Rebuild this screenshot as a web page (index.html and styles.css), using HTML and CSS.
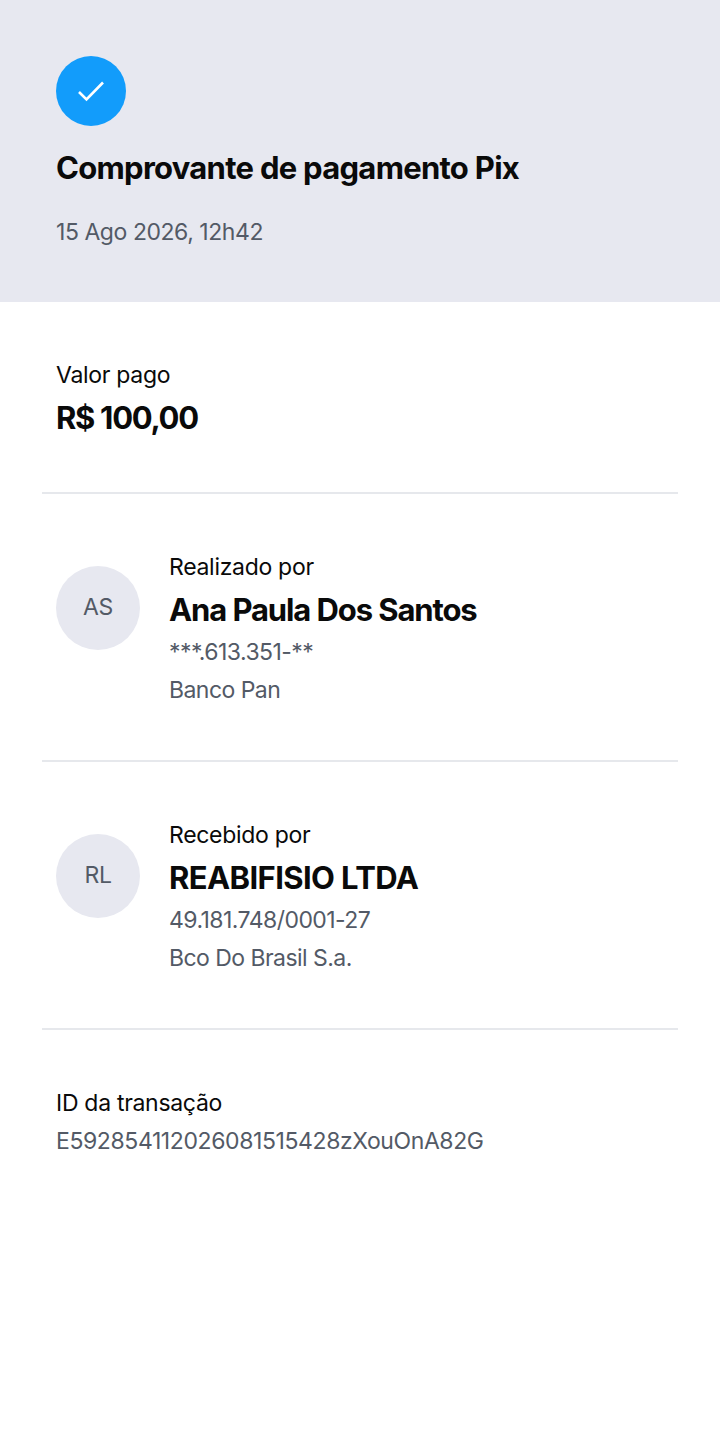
FILE: index.html
```html
<!DOCTYPE html>
<html lang="pt">
<head>
  <meta charset="UTF-8">
  <title>Comprovante de pagamento Pix</title>
  <link rel="stylesheet" href="styles.css">
</head>
<body>
  <header class="top">
    <div class="check">
      <svg width="30" height="24" viewBox="0 0 30 24"><path d="M3 13 L10.5 20.5 L27 3.5" fill="none" stroke="#fff" stroke-width="2.6"/></svg>
    </div>
    <h1>Comprovante de pagamento Pix</h1>
    <p class="date">15 Ago 2026, 12h42</p>
  </header>
  <section class="amount">
    <p class="label">Valor pago</p>
    <p class="value">R$ 100,00</p>
  </section>
  <section class="party">
    <div class="avatar">AS</div>
    <div class="info">
      <p class="label">Realizado por</p>
      <p class="name">Ana Paula Dos Santos</p>
      <p class="muted">***.613.351-**</p>
      <p class="muted">Banco Pan</p>
    </div>
  </section>
  <section class="party">
    <div class="avatar">RL</div>
    <div class="info">
      <p class="label">Recebido por</p>
      <p class="name name-caps">REABIFISIO LTDA</p>
      <p class="muted">49.181.748/0001-27</p>
      <p class="muted">Bco Do Brasil S.a.</p>
    </div>
  </section>
  <section class="txid">
    <p class="label">ID da transação</p>
    <p class="muted">E592854112026081515428zXouOnA82G</p>
  </section>
</body>
</html>
```

FILE: styles.css
```css
body {
  margin: 0;
  font-family: 'Inter', 'Liberation Sans', sans-serif;
  background: #fff;
  color: #0a0a0a;
  min-height: 1435px;
}

p, h1 {
  margin: 0;
}

.top {
  background: #e7e8f0;
  height: 302px;
  box-sizing: border-box;
  padding: 56px 56px 0;
}

.check {
  width: 70px;
  height: 70px;
  border-radius: 50%;
  background: #129cfb;
  display: flex;
  align-items: center;
  justify-content: center;
}

h1 {
  margin-top: 23px;
  font-size: 31px;
  line-height: 38px;
  font-weight: 700;
  letter-spacing: -0.72px;
}

.date {
  margin-top: 26px;
  font-size: 23px;
  line-height: 38px;
  color: #535a66;
  letter-spacing: -0.45px;
}

.label {
  font-size: 23px;
  line-height: 38px;
  letter-spacing: -0.3px;
}

.muted {
  font-size: 23px;
  line-height: 38px;
  color: #535a66;
  letter-spacing: -0.55px;
}

.amount {
  margin: 0 42px;
  padding: 54px 14px 0;
  height: 192px;
  box-sizing: border-box;
  border-bottom: 2px solid #e6e8ec;
}

.value {
  font-size: 31px;
  line-height: 48px;
  font-weight: 700;
  letter-spacing: -1.3px;
}

.party {
  margin: 0 42px;
  padding: 54px 14px 0;
  height: 268px;
  box-sizing: border-box;
  border-bottom: 2px solid #e6e8ec;
  display: flex;
  gap: 29px;
}

.avatar {
  width: 84px;
  height: 84px;
  margin-top: 18px;
  padding-bottom: 2px;
  box-sizing: border-box;
  border-radius: 50%;
  background: #e7e8f0;
  color: #535a66;
  font-size: 23px;
  letter-spacing: -0.3px;
  display: flex;
  align-items: center;
  justify-content: center;
  flex-shrink: 0;
}

.name {
  font-size: 31px;
  line-height: 46px;
  padding-top: 1px;
  font-weight: 700;
  letter-spacing: -1.1px;
}

.name-caps {
  letter-spacing: -0.6px;
}

.txid {
  margin: 0 42px;
  padding: 54px 14px 0;
}

.txid .muted {
  letter-spacing: -0.4px;
}
```
